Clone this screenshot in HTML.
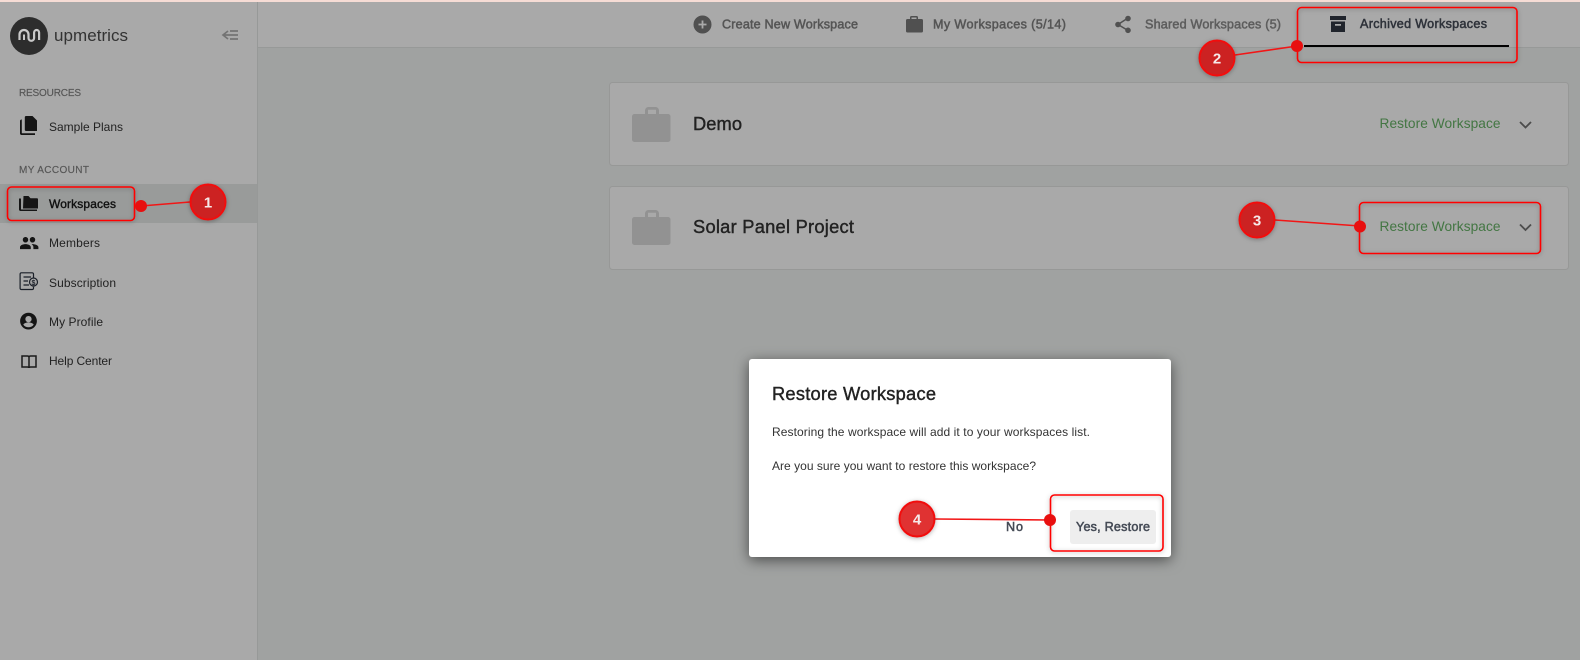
<!DOCTYPE html>
<html><head><meta charset="utf-8"><title>Restore Workspace</title>
<style>
html,body{margin:0;padding:0;width:1580px;height:660px;overflow:hidden;background:#a0a2a1}
svg{display:block}
text{font-family:"Liberation Sans",sans-serif}
</style></head><body>
<svg xmlns="http://www.w3.org/2000/svg" width="1580" height="660" viewBox="0 0 1580 660">
<defs>
<filter id="ms" x="-20%" y="-20%" width="140%" height="140%"><feDropShadow dx="0" dy="3" stdDeviation="7" flood-color="#000" flood-opacity=".55"/></filter>
<filter id="rs" x="-20%" y="-30%" width="140%" height="160%"><feDropShadow dx="0" dy="1" stdDeviation="2.5" flood-color="#000" flood-opacity=".3"/></filter>
</defs>
<rect width="1580" height="660" fill="#a0a2a1"/>
<rect width="257" height="660" fill="#a9a9a9"/>
<rect x="257" width="1323" height="47.5" fill="#a9a9a9"/>
<rect x="257" y="47" width="1323" height="1" fill="#979998"/>
<rect x="257" width="1" height="660" fill="#979998"/>
<rect width="1580" height="2" fill="#f6dcd5"/>

<!-- logo -->
<circle cx="29" cy="36" r="19" fill="#2d2d2d"/>
<path d="M19.500 40V34.500a4.500 4.500 0 0 1 9 0V38a2.800 2.800 0 0 0 5.600 0V32.500a2.500 2.500 0 0 1 5 0V40" fill="none" stroke="#c9c9c9" stroke-width="2.200"/>
<path d="M24 40V34.500" fill="none" stroke="#c9c9c9" stroke-width="2"/>
<text x="54" y="41" font-size="17" fill="#333" textLength="74">upmetrics</text>
<path d="M228 31l-5 4 5 4M224 35h14M230 31h8M230 39h8" fill="none" stroke="#737373" stroke-width="1.700"/>

<!-- sidebar -->
<text x="19" y="96" font-size="10" fill="#555" stroke="#555" stroke-width=".15" textLength="62">RESOURCES</text>
<text x="19" y="173" font-size="10" fill="#555" stroke="#555" stroke-width=".15" textLength="70">MY ACCOUNT</text>
<rect y="184" width="257" height="39" fill="#999b9a"/>

<g fill="#151515">
<path d="M26 116h6.500l4.500 4.500V131H26c-.700 0-1.200-.500-1.200-1.200V117.200c0-.700.500-1.200 1.200-1.200z"/>
<path d="M23 119.500h-1.500c-.800 0-1.500.700-1.500 1.500v12.500c0 .800.700 1.500 1.500 1.500h13.500v-1.800H22.300c-.300 0-.500-.200-.500-.500V119.500z"/>
<path d="M23.500 196h5l2 2.200h6.500c.600 0 1 .400 1 1V208.500H23z"/>
<path d="M21 198.500h-2v11c0 .800.700 1.500 1.500 1.500H37v-1.500H21.500c-.300 0-.500-.200-.500-.500z"/>
<path d="M32.500 242.500c1.500 0 2.700-1.300 2.700-2.800s-1.200-2.700-2.700-2.700-2.700 1.200-2.700 2.700 1.200 2.800 2.700 2.800zm-7 0c1.500 0 2.700-1.300 2.700-2.800s-1.200-2.700-2.700-2.700-2.700 1.200-2.700 2.700 1.200 2.800 2.700 2.800zm0 1.600c-2.100 0-5.500 1-5.500 3v2h10.800v-2c0-2-3.200-3-5.300-3zm7 0c-.300 0-.600 0-.900.100 1.100.700 1.800 1.700 1.800 2.900v2h5v-2c0-2-3.800-3-5.900-3z"/>
<path d="M28.500 312.800c-4.600 0-8.400 3.700-8.400 8.300s3.800 8.400 8.400 8.400 8.400-3.800 8.400-8.400-3.800-8.300-8.400-8.300zm0 3.200c1.800 0 3.100 1.400 3.100 3.100s-1.300 3.100-3.100 3.100-3.100-1.400-3.100-3.100 1.300-3.100 3.100-3.100zm0 11.300c-2.100 0-4-1-5.100-2.600.1-1.400 3.400-2.300 5.100-2.300s5 .900 5.100 2.300c-1.100 1.600-3 2.600-5.100 2.600z"/>
</g>
<g fill="none" stroke="#1a1f28" stroke-width="1.200">
<path d="M33.500 277.500v-3.500a1.200 1.200 0 0 0-1.200-1.200H21.300a1.200 1.200 0 0 0-1.200 1.200v14.300a1.200 1.200 0 0 0 1.200 1.200h11a1.200 1.200 0 0 0 1.200-1.200v-1.500"/>
<path d="M23.500 277h7.500M23.500 281h4.500M23.500 285h5.500"/>
<circle cx="33.500" cy="282" r="4"/>
</g>
<text x="33.500" y="284.800" font-size="7" font-weight="700" text-anchor="middle" fill="#1a1f28">$</text>
<path d="M22 356h5.300c1 0 1.700.500 1.700 1.200v10.800c0-.600-.600-1-1.700-1H22zM36 356h-5.300c-1 0-1.700.500-1.700 1.200v10.800c0-.600.600-1 1.700-1H36z" fill="none" stroke="#1a1a1a" stroke-width="1.500"/>

<g font-size="12" fill="#222">
<text x="49" y="131" textLength="74">Sample Plans</text>
<text x="49" y="208" fill="#111" stroke="#111" stroke-width=".4" textLength="67">Workspaces</text>
<text x="49" y="247" textLength="51">Members</text>
<text x="49" y="287" textLength="67">Subscription</text>
<text x="49" y="326" textLength="54">My Profile</text>
<text x="49" y="365" textLength="63">Help Center</text>
</g>

<!-- tabs -->
<circle cx="702.500" cy="24.500" r="9" fill="#505050"/>
<path d="M702.500 20.500v8M698.500 24.500h8" stroke="#a9a9a9" stroke-width="1.800"/>
<path d="M906 20.500a1.500 1.500 0 0 1 1.500-1.500H910v-1.500a1.500 1.500 0 0 1 1.500-1.500h5a1.500 1.500 0 0 1 1.500 1.500V19h3.500a1.500 1.500 0 0 1 1.500 1.500v10.500a1.500 1.500 0 0 1-1.500 1.500h-14a1.500 1.500 0 0 1-1.500-1.500zM911.500 19h5v-1.500h-5z" fill="#505050" fill-rule="evenodd"/>
<path d="M1128 18l-10 6.500 10 6" fill="none" stroke="#505050" stroke-width="1.500"/>
<g fill="#505050"><circle cx="1128" cy="18.500" r="2.800"/><circle cx="1118" cy="24.500" r="2.800"/><circle cx="1128" cy="30.300" r="2.800"/></g>
<path d="M1330 16h16v4h-16zM1331 21.500h14v10.500h-14zM1335 24v1.700h6V24z" fill="#20242c" fill-rule="evenodd"/>
<g font-size="12.600" stroke-width=".5">
<text x="722" y="28.500" fill="#555" stroke="#555" textLength="136">Create New Workspace</text>
<text x="933" y="28.500" fill="#555" stroke="#555" textLength="133">My Workspaces (5/14)</text>
<text x="1145" y="28.500" fill="#5d5d5d" stroke="#5d5d5d" textLength="136">Shared Workspaces (5)</text>
<text x="1360" y="28" fill="#2e323a" stroke="#2e323a" textLength="127">Archived Workspaces</text>
</g>
<rect x="1304" y="45" width="205" height="2" fill="#000"/>

<!-- cards -->
<g fill="#a9a9a9" stroke="#979897">
<rect x="609.500" y="82.500" width="959" height="83" rx="3"/>
<rect x="609.500" y="186.500" width="959" height="83" rx="3"/>
</g>
<g fill="#929292" fill-rule="evenodd">
<path d="M634.500 114H645v-3.500a3.500 3.500 0 0 1 3.500-3.500h7a3.500 3.500 0 0 1 3.500 3.500V114h9a2.500 2.500 0 0 1 2.500 2.500v23a2.500 2.500 0 0 1-2.500 2.500h-33.500a2.500 2.500 0 0 1-2.500-2.500v-23a2.500 2.500 0 0 1 2.500-2.500zM648 109.800V114h8v-4.200z"/>
<path transform="translate(0,103)" d="M634.500 114H645v-3.500a3.500 3.500 0 0 1 3.500-3.500h7a3.500 3.500 0 0 1 3.500 3.500V114h9a2.500 2.500 0 0 1 2.500 2.500v23a2.500 2.500 0 0 1-2.500 2.500h-33.500a2.500 2.500 0 0 1-2.500-2.500v-23a2.500 2.500 0 0 1 2.500-2.500zM648 109.800V114h8v-4.200z"/>
</g>
<g font-size="18.300" fill="#222" stroke="#222" stroke-width=".4">
<text x="693" y="130" textLength="49">Demo</text>
<text x="693" y="233" textLength="161">Solar Panel Project</text>
</g>
<g font-size="13.700" fill="#437643">
<text x="1379.500" y="128" textLength="121">Restore Workspace</text>
<text x="1379.500" y="231" textLength="121">Restore Workspace</text>
</g>
<path d="M1520 122l5.500 5.500 5.500-5.500M1520 224.500l5.500 5.500 5.500-5.500" fill="none" stroke="#4c4c4c" stroke-width="1.800"/>

<!-- modal -->
<rect x="749" y="359" width="422" height="198" rx="3" fill="#fff" filter="url(#ms)"/>
<text x="772" y="400" font-size="18.300" fill="#222" stroke="#222" stroke-width=".4" textLength="164">Restore Workspace</text>
<text x="772" y="436" font-size="12" fill="#333" textLength="318">Restoring the workspace will add it to your workspaces list.</text>
<text x="772" y="470" font-size="12" fill="#333" textLength="264">Are you sure you want to restore this workspace?</text>
<text x="1006" y="531" font-size="12.600" fill="#444a55" stroke="#444a55" stroke-width=".5" textLength="17">No</text>
<rect x="1070" y="510" width="86" height="34" rx="3" fill="#eeeeee"/>
<text x="1076" y="531" font-size="12.600" fill="#444a55" stroke="#444a55" stroke-width=".5" textLength="74">Yes, Restore</text>

<!-- annotations -->
<g fill="none" stroke="#f00" stroke-width="1.600" filter="url(#rs)">
<rect x="7.500" y="187" width="127" height="33.500" rx="4"/>
<rect x="1297.500" y="7.500" width="219.500" height="55" rx="4"/>
<rect x="1359.500" y="202.500" width="181" height="51" rx="4"/>
<rect x="1050.500" y="495" width="112.500" height="56" rx="4"/>
</g>
<g stroke="#f21616" stroke-width="1.600">
<path d="M141 206L190 202M1235 55L1297 46M1275 220L1360 226M935 519L1050 520"/>
</g>
<g fill="#e80f0f">
<circle cx="141" cy="206" r="6"/><circle cx="1297" cy="46" r="6"/><circle cx="1360" cy="226.500" r="6"/><circle cx="1050" cy="520" r="6"/>
</g>
<g stroke="#f20f0f" stroke-width="2" filter="url(#rs)">
<circle cx="208" cy="202" r="17.500" fill="#cc2222"/>
<circle cx="1217" cy="58" r="17.500" fill="#cc2222"/>
<circle cx="1257" cy="220" r="17.500" fill="#cc2222"/>
<circle cx="917" cy="519" r="17.500" fill="#e03030"/>
</g>
<g font-size="15" font-weight="700" fill="#f6eaea" text-anchor="middle">
<text x="208" y="207.500">1</text>
<text x="1217" y="63.500">2</text>
<text x="1257" y="225.500">3</text>
<text x="917" y="524.500">4</text>
</g>
</svg>
</body></html>
